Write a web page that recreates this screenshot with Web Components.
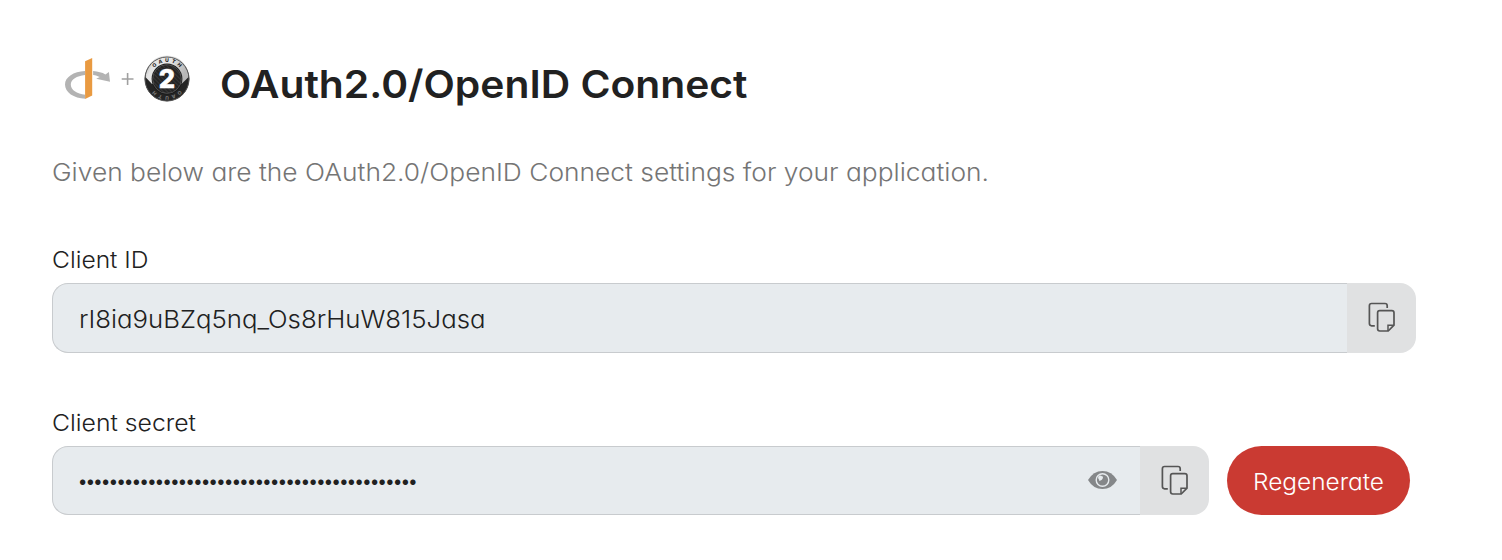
<!DOCTYPE html>
<html lang="en">
<head>
<meta charset="utf-8">
<title>OAuth2.0/OpenID Connect</title>
<style>
body { margin: 0; background: #fff; color: #212121; font-family: Inter, "Liberation Sans", sans-serif; }
</style>
</head>
<body>
<settings-page></settings-page>
<script>
function define(name, html, ready) {
  const template = document.createElement('template');
  template.innerHTML = html;
  customElements.define(name, class extends HTMLElement {
    constructor() {
      super();
      this.attachShadow({ mode: 'open' }).append(template.content.cloneNode(true));
    }
    connectedCallback() { if (ready) ready(this); }
  });
}

/* A line of text widened to span the given measure. */
define('wide-text', `
<style>
:host { display: block; text-align: left; white-space: nowrap; font-feature-settings: "cv11", "calt" 0; font-optical-sizing: none; font-variant-ligatures: none; }
span { display: inline-block; transform-origin: 0 50%; }
</style><span><slot></slot></span>`, el => {
  const span = el.shadowRoot.querySelector('span');
  const measure = Number(el.getAttribute('measure'));
  const natural = span.getBoundingClientRect().width;
  el.style.width = measure + 'px';
  if (el.hasAttribute('spaced')) {
    span.style.letterSpacing = (measure - natural) / el.textContent.length + 'px';
  } else {
    span.style.transform = `scaleX(${measure / natural})`;
  }
});

define('protocol-logo', `
<style>:host { display: block; width: 130px; height: 50px; } svg { display: block; }</style>
<svg width="130" height="50" viewBox="62 54 130 50" aria-hidden="true">
  <defs>
    <linearGradient id="rim" x1="0" y1="0" x2="1" y2=".3"><stop offset="0" stop-color="#999"/><stop offset=".25" stop-color="#e4e4e4"/><stop offset=".55" stop-color="#e8e8e8"/><stop offset="1" stop-color="#b8b8b8"/></linearGradient>
    <pattern id="mesh" width="3" height="3" patternUnits="userSpaceOnUse" patternTransform="rotate(45)"><rect width="3" height="3" fill="#242424"/><path d="M0 0H3" stroke="#484848" stroke-width="1"/></pattern>
    <path id="arc" d="M150 79A17 17 0 0 1 184 79"/>
    <path id="lower" d="M184 79A17 17 0 0 1 150 79"/>
  </defs>
  <path d="M85 71.1C73.5 71.7 65 77.2 65 84.6C65 92.5 73.6 98.4 85.3 98.7V94.7C76.7 93.7 70.8 90 70.8 84.5C70.8 79.4 76.7 75.8 85 74.9Z" fill="#b3b3b3"/>
  <path d="M93.1 71.1C98 71.5 102.2 72.7 105.4 74.4L108.9 72.1L110 81.7L96.2 78.7L99.8 77.1C98 76.1 95.7 75.4 93.1 75Z" fill="#b3b3b3"/>
  <path d="M85.1 61.2L92.2 58V95.5L85.1 98.9Z" fill="#e99a41"/>
  <path d="M121.7 79H133.5M127.6 73.1V84.9" stroke="#a0a0a0" stroke-width="1.6"/>
  <circle cx="167" cy="79" r="22.3" fill="#242424"/>
  <path d="M145.4 77A21.6 21.6 0 0 1 188.6 77L181.5 84H152Z" fill="url(#rim)"/>
  <circle cx="167" cy="79" r="22" fill="none" stroke="#555" stroke-width="1"/>
  <circle cx="167" cy="79" r="15.4" fill="#171717"/>
  <circle cx="167" cy="79" r="14.4" fill="url(#mesh)" stroke="#777" stroke-width=".5"/>
  <g font-family="Inter, sans-serif" font-weight="800" text-anchor="middle">
    <text x="167" y="88.3" font-size="25.5" fill="#fff" stroke="#fff" stroke-width=".6">2</text>
    <text font-size="5" fill="#222" letter-spacing="2.6"><textPath href="#arc" startOffset="52%">OAUTH</textPath></text>
    <text font-size="5" fill="#777" letter-spacing="2.6"><textPath href="#lower" startOffset="52%">OAUTH</textPath></text>
  </g>
</svg>`);

define('page-heading', `
<style>
:host { display: flex; gap: 28px; height: 60px; padding-left: 10px; }
wide-text { font-weight: 600; font-size: 38.5px; line-height: 61px; }
</style>
<protocol-logo></protocol-logo>
<wide-text role="heading" aria-level="1" measure="527.5">OAuth2.0/OpenID Connect</wide-text>`);

define('copy-button', `
<style>
:host { display: flex; box-sizing: border-box; flex: 0 0 69px; background: #e0e1e2; border-radius: 0 16px 16px 0; align-items: center; justify-content: center; }
svg { display: block; margin-bottom: 2px; }
</style>
<svg width="28" height="32" viewBox="0 0 28 32" fill="none" stroke="#555" stroke-width="1.7" aria-label="Copy">
  <path d="M6.8 24.8H3.6Q1.4 24.8 1.4 22.6V4.7Q1.4 2.5 3.6 2.5H17Q19.2 2.5 19.2 4.7V7"/>
  <path d="M11.8 9.6H23.8Q26 9.6 26 11.8V24.2L20.2 30H11.8Q9.6 30 9.6 27.8V11.8Q9.6 9.6 11.8 9.6Z"/>
  <path d="M20 30V24.2H26" stroke-width="1.5"/>
</svg>`);

define('eye-icon', `
<style>:host { display: block; } svg { display: block; }</style>
<svg width="29" height="20" viewBox="0 0 29 20" aria-label="Show">
  <path d="M0 10Q5.3 .9 14.5 .9T29 10Q23.7 19.1 14.5 19.1T0 10Z" fill="#858789"/>
  <circle cx="14.5" cy="10" r="6.3" fill="none" stroke="#e7ebee" stroke-width="1.4"/>
  <path d="M11 10.1A3.5 3.5 0 0 0 14.3 6.6" fill="none" stroke="#e7ebee" stroke-width="1.5"/>
  <circle cx="12.2" cy="7.7" r="2.1" fill="#e7ebee"/>
</svg>`);

define('credential-field', `
<style>
:host { display: block; }
.label { height: 32px; font-size: 23.4px; line-height: 31px; padding-bottom: 7px; }
.row { display: flex; gap: 18px; height: var(--field-height, 70px); }
.group { display: flex; flex: 1; }
.box { flex: 1; display: flex; align-items: center; justify-content: space-between; box-sizing: border-box; border: 1px solid #c8cbce; border-right: 0; border-radius: 16px 0 0 16px; background: #e7ebee; padding: 2px 23px 0 26px; font-size: 24.6px; line-height: 31px; }
</style>
<div class="label"><slot name="label"></slot></div>
<div class="row"><div class="group"><div class="box"><slot></slot></div><copy-button></copy-button></div><slot name="action"></slot></div>`);

define('pill-button', `
<style>
:host { display: block; flex: 0 0 183px; }
button { display: flex; width: 100%; height: 100%; align-items: center; justify-content: flex-start; border: 0; border-radius: 35px; padding: 3px 0 0 26px; background: #ca3a32; color: #fff; font: 300 23px Inter, sans-serif; }
</style>
<button><slot></slot></button>`);

define('settings-page', `
<style>
:host { display: block; box-sizing: border-box; height: 560px; padding: 54px 86px 0 52px; }
.intro { margin-top: 41px; color: #757575; font-size: 24.6px; line-height: 34px; font-weight: 320; }
.id { margin-top: 55px; width: 1364px; }
.secret { margin-top: 54px; width: 1358px; --field-height: 69px; }
credential-field { font-weight: 330; }
.dots { font-size: 20px; margin-left: -2px; }
eye-icon { margin-top: -3px; }
</style>
<page-heading></page-heading>
<wide-text class="intro" measure="937">Given below are the OAuth2.0/OpenID Connect settings for your application.</wide-text>
<credential-field class="id">
  <wide-text slot="label" measure="96.5">Client ID</wide-text>
  <wide-text measure="406.5">rI8ia9uBZq5nq_Os8rHuW815Jasa</wide-text>
</credential-field>
<credential-field class="secret">
  <wide-text slot="label" measure="144">Client secret</wide-text>
  <wide-text class="dots" spaced measure="338">••••••••••••••••••••••••••••••••••••••••••••</wide-text>
  <eye-icon></eye-icon>
  <pill-button slot="action"><wide-text measure="131">Regenerate</wide-text></pill-button>
</credential-field>`);
</script>
</body>
</html>
